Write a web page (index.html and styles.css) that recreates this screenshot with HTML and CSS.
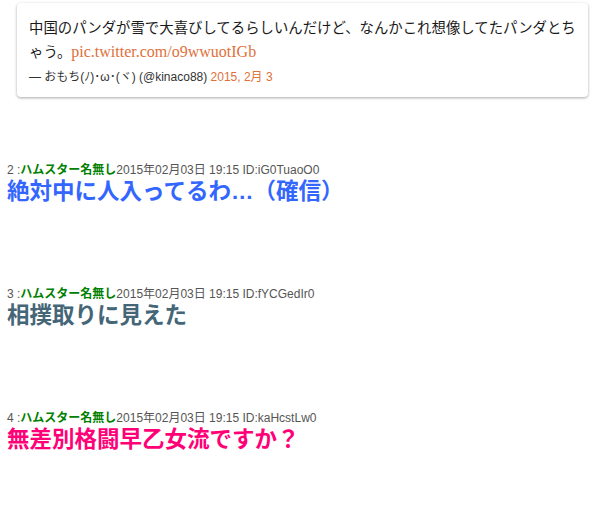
FILE: index.html
```html
<!DOCTYPE html>
<html lang="ja">
<head>
    <meta charset="UTF-8">
    <title>まとめ</title>
    <link rel="stylesheet" href="styles.css">
</head>
<body>
    <div class="tweet">
        <p class="tweet-text">中国のパンダが雪で大喜びしてるらしいんだけど、なんかこれ想像してたパンダとちゃう。<a href="#">pic.twitter.com/o9wwuotIGb</a></p>
        <p class="tweet-author">— おもち(ﾉ)･ω･(ヾ) (@kinaco88) <a href="#">2015, 2月 3</a></p>
    </div>

    <div class="post">
        <div class="post-head">2 :<span class="name">ハムスター名無し</span>2015年02月03日 19:15 ID:iG0TuaoO0</div>
        <div class="post-body blue">絶対中に人入ってるわ…（確信）</div>
    </div>

    <div class="post">
        <div class="post-head">3 :<span class="name">ハムスター名無し</span>2015年02月03日 19:15 ID:fYCGedIr0</div>
        <div class="post-body slate">相撲取りに見えた</div>
    </div>

    <div class="post">
        <div class="post-head">4 :<span class="name">ハムスター名無し</span>2015年02月03日 19:15 ID:kaHcstLw0</div>
        <div class="post-body pink">無差別格闘早乙女流ですか？</div>
    </div>
</body>
</html>
```

FILE: styles.css
```css
* {
    box-sizing: border-box;
    margin: 0;
    padding: 0;
}

body {
    font-family: 'Liberation Sans', 'Noto Sans CJK JP', sans-serif;
    background-color: #fff;
    color: #333;
    padding: 3px 6px 0 7px;
}

.tweet {
    margin: 0 10px 0 10px;
    width: 571px;
    padding: 13px 8px 9px 12px;
    border-radius: 4px;
    box-shadow: 0 1px 3px rgba(0, 0, 0, 0.35);
    background-color: #fff;
}

.tweet-text {
    font-family: 'Liberation Serif', 'Noto Sans CJK JP', serif;
    font-size: 14.4px;
    line-height: 24px;
    color: #1a1a1a;
}

.tweet-text a {
    font-size: 16px;
    line-height: 20px;
}

.tweet a {
    color: #e0703a;
    text-decoration: none;
}

.tweet-author {
    font-size: 12px;
    line-height: 22px;
    margin-top: 2px;
    color: #333;
}

.post {
    margin-top: 65px;
    height: 59px;
}

.post-head {
    font-size: 12px;
    line-height: 16px;
    color: #555;
}

.post-head .name {
    color: #008000;
    font-weight: bold;
}

.post-body {
    font-size: 22.5px;
    line-height: 27px;
    font-weight: bold;
}

.blue {
    color: #3366ff;
}

.slate {
    color: #446677;
}

.pink {
    color: #ff0077;
}
```
